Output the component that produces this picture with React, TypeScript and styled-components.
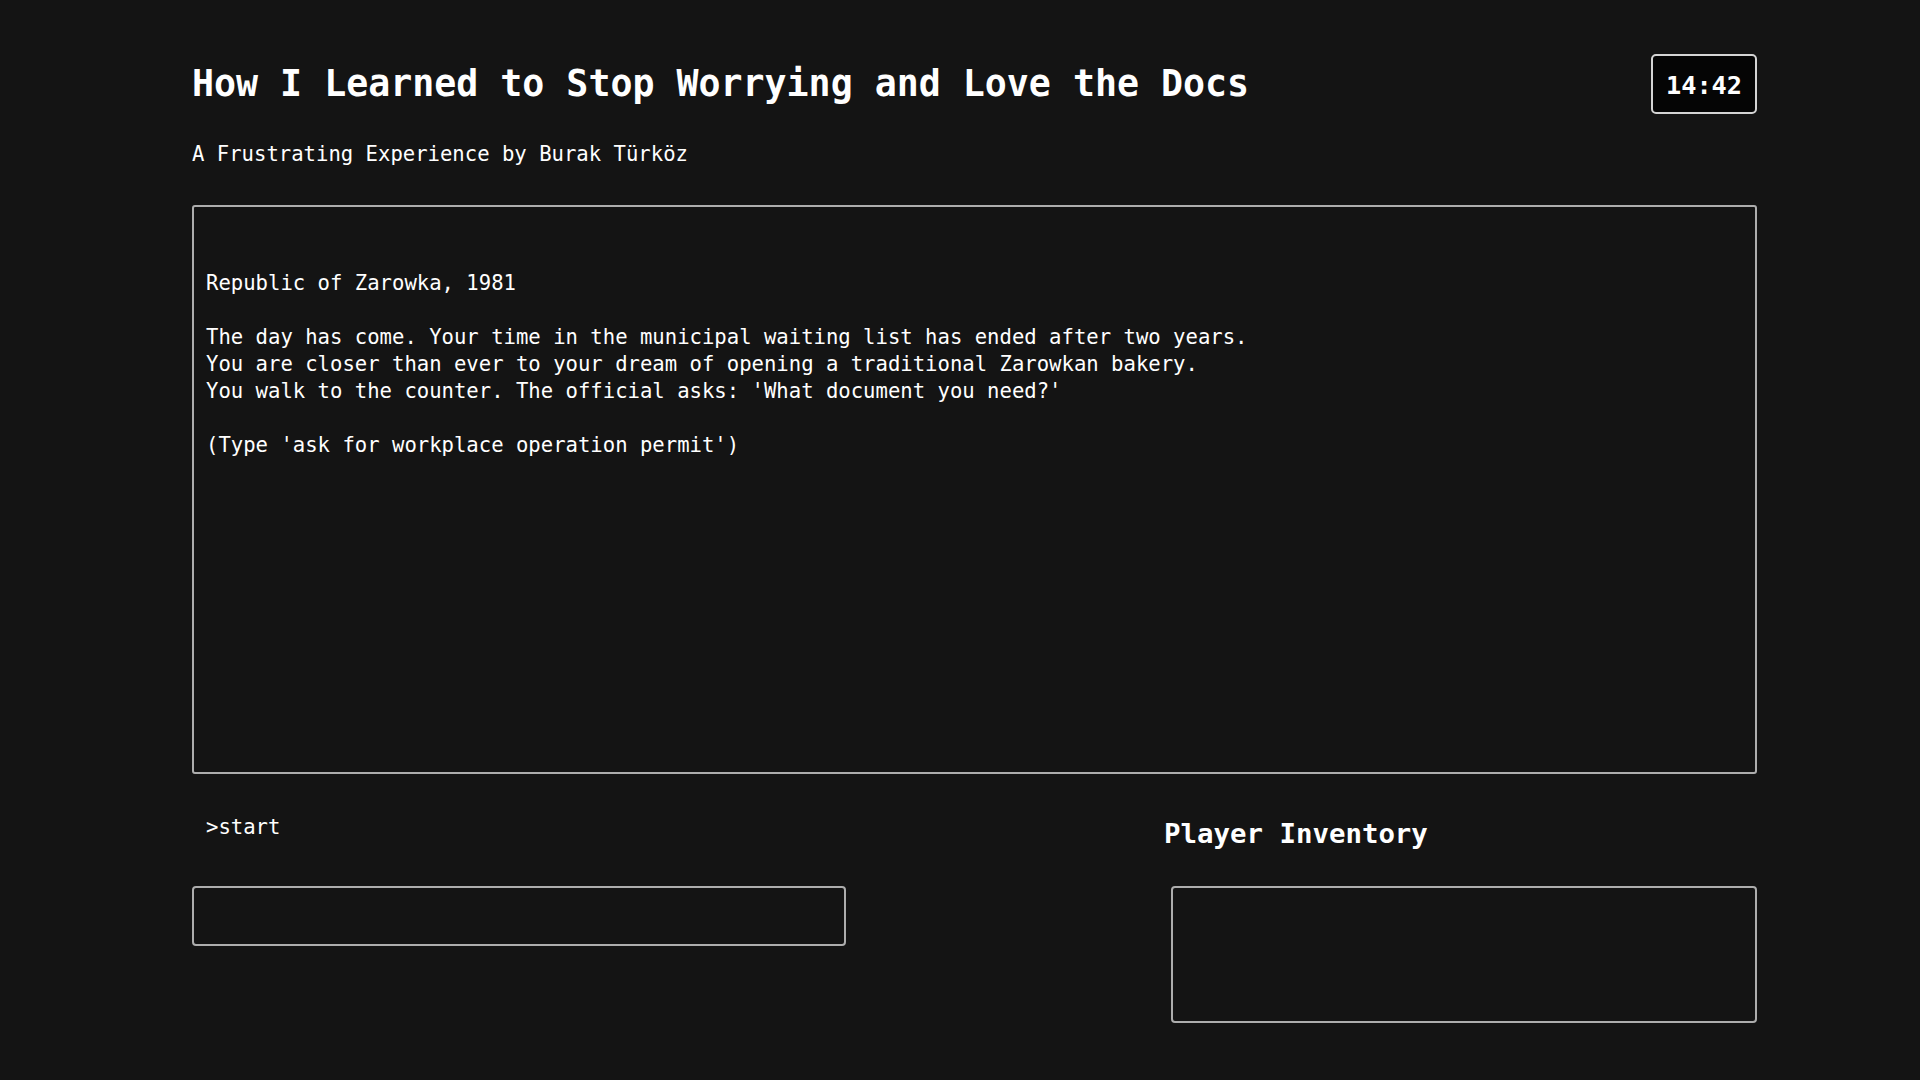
import React from "react";
import styled, { createGlobalStyle } from "styled-components";

const GlobalStyle = createGlobalStyle`
  html, body {
    margin: 0;
    padding: 0;
    background: #141414;
    color: #ffffff;
    font-family: "DejaVu Sans Mono", "Liberation Mono", monospace;
  }
`;

const Page = styled.div`
  box-sizing: border-box;
  min-height: 1080px;
  padding: 54px 0 0 192px;
`;

const Container = styled.div`
  width: 1565px;
  display: flex;
  flex-direction: column;
`;

const Header = styled.header`
  display: flex;
  align-items: center;
  justify-content: space-between;
  height: 60px;
`;

const Title = styled.h1`
  margin: 0;
  font-size: 36.6px;
  font-weight: bold;
  line-height: 44px;
  letter-spacing: 0;
`;

const Clock = styled.div`
  box-sizing: border-box;
  width: 106px;
  height: 60px;
  border: 2px solid #d4d4d4;
  border-radius: 5px;
  background: #050505;
  display: flex;
  align-items: center;
  justify-content: center;
  padding-top: 2px;
  font-size: 25.3px;
  font-weight: bold;
`;

const Subtitle = styled.p`
  margin: 27px 0 0;
  font-size: 20.6px;
  line-height: 27px;
`;

const Story = styled.div`
  box-sizing: border-box;
  margin-top: 37px;
  height: 569px;
  border: 2px solid #adadad;
  border-radius: 3px;
  padding: 63px 12px 12px;
  font-size: 20.6px;
  line-height: 27px;
  white-space: pre-wrap;
`;

const BottomRow = styled.div`
  display: flex;
  align-items: flex-start;
  justify-content: space-between;
`;

const CommandColumn = styled.div`
  width: 654px;
  display: flex;
  flex-direction: column;
`;

const Prompt = styled.div`
  margin-top: 40px;
  padding-left: 14px;
  font-size: 20.6px;
  line-height: 27px;
`;

const CommandInput = styled.input`
  box-sizing: border-box;
  margin-top: 45px;
  width: 654px;
  height: 60px;
  background: transparent;
  border: 2px solid #adadad;
  border-radius: 4px;
  color: #ffffff;
  font-family: inherit;
  font-size: 20.6px;
  padding: 0 12px;
  outline: none;
`;

const InventoryColumn = styled.div`
  width: 593px;
  display: flex;
  flex-direction: column;
`;

const InventoryTitle = styled.h2`
  margin: 43px 0 0;
  font-size: 27.4px;
  line-height: 33px;
  font-weight: bold;
`;

const InventoryBox = styled.div`
  box-sizing: border-box;
  margin: 36px 0 0 7px;
  height: 137px;
  border: 2px solid #adadad;
  border-radius: 4px;
`;

const storyText = `Republic of Zarowka, 1981

The day has come. Your time in the municipal waiting list has ended after two years.
You are closer than ever to your dream of opening a traditional Zarowkan bakery.
You walk to the counter. The official asks: 'What document you need?'

(Type 'ask for workplace operation permit')`;

export default function App() {
  return (
    <>
      <GlobalStyle />
      <Page>
        <Container>
          <Header>
            <Title>How I Learned to Stop Worrying and Love the Docs</Title>
            <Clock>14:42</Clock>
          </Header>
          <Subtitle>A Frustrating Experience by Burak Türköz</Subtitle>
          <Story>{storyText}</Story>
          <BottomRow>
            <CommandColumn>
              <Prompt>&gt;start</Prompt>
              <CommandInput type="text" aria-label="command" />
            </CommandColumn>
            <InventoryColumn>
              <InventoryTitle>Player Inventory</InventoryTitle>
              <InventoryBox />
            </InventoryColumn>
          </BottomRow>
        </Container>
      </Page>
    </>
  );
}
